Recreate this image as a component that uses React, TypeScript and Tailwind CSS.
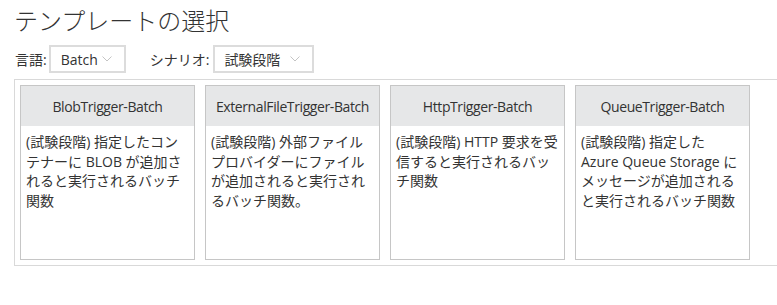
import React from "react";

const font = '"Open Sans", "Noto Sans CJK JP", sans-serif';

const cards = [
  { title: "BlobTrigger-Batch", desc: "(試験段階) 指定したコンテナーに BLOB が追加されると実行されるバッチ関数" },
  { title: "ExternalFileTrigger-Batch", desc: "(試験段階) 外部ファイルプロバイダーにファイルが追加されると実行されるバッチ関数。" },
  { title: "HttpTrigger-Batch", desc: "(試験段階) HTTP 要求を受信すると実行されるバッチ関数" },
  { title: "QueueTrigger-Batch", desc: "(試験段階) 指定した Azure Queue Storage にメッセージが追加されると実行されるバッチ関数" },
];

function Chevron() {
  return (
    <svg width="10" height="6" viewBox="0 0 10 6" className="shrink-0">
      <path d="M0.5 0.5 L5 5 L9.5 0.5" fill="none" stroke="#c4c4c4" strokeWidth="1" />
    </svg>
  );
}

export default function App() {
  return (
    <div className="bg-white text-[#333] w-[777px] h-[305px] overflow-hidden" style={{ fontFamily: font }}>
      <div className="pl-[14px] pt-[5px]">
        <h1 className="text-[24px] leading-[32px] font-light text-[#333]">テンプレートの選択</h1>
        <div className="flex items-center mt-[8px] h-[28px] text-[14px]">
          <span className="ml-[1px]">言語:</span>
          <div className="ml-[2px] w-[77px] h-[28px] border-2 border-[#dcdcdc] flex items-center justify-between pl-[10px] pr-[12px]">
            <span>Batch</span>
            <Chevron />
          </div>
          <span className="ml-[24px]">シナリオ:</span>
          <div className="ml-[4px] w-[101px] h-[28px] border-2 border-[#dcdcdc] flex items-center justify-between pl-[9px] pr-[12px]">
            <span>試験段階</span>
            <Chevron />
          </div>
        </div>
        <div className="mt-[6px] w-[800px] border border-[#d9d9d9] p-[5px] flex gap-[10px]">
          {cards.map((c) => (
            <div key={c.title} className="w-[175px] h-[175px] border border-[#c6c6c6] flex flex-col">
              <div className="h-[40px] bg-[#e6e7e8] flex items-center justify-center text-[14px] tracking-[-0.4px] text-[#333] shrink-0">
                {c.title}
              </div>
              <div className="px-[5px] pt-[6px] text-[14px] leading-[19.5px] text-[#333]">{c.desc}</div>
            </div>
          ))}
        </div>
      </div>
    </div>
  );
}
